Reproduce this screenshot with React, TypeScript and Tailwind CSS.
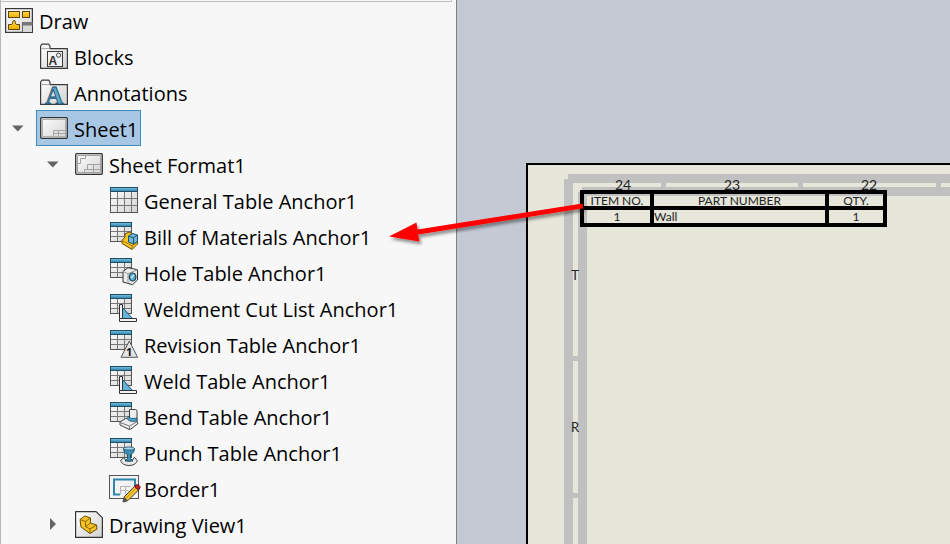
import type { ReactNode } from "react";

const INK = "#3a3a3a";

function Icon({ children }: { children: ReactNode }) {
  return (
    <svg width="28" height="28" viewBox="0 0 28 28" className="shrink-0 overflow-visible" aria-hidden="true">
      {children}
    </svg>
  );
}

function Gradients() {
  return (
    <svg width="0" height="0" className="absolute" aria-hidden="true">
      <defs>
        <linearGradient id="paper" x1="0" y1="0" x2="1" y2="1">
          <stop offset="0" stopColor="#ffffff" />
          <stop offset="1" stopColor="#d2d2d2" />
        </linearGradient>
        <linearGradient id="gold" x1="0" y1="0" x2="0" y2="1">
          <stop offset="0" stopColor="#ffd94a" />
          <stop offset="1" stopColor="#eeb000" />
        </linearGradient>
        <linearGradient id="sea" x1="0" y1="0" x2="0" y2="1">
          <stop offset="0" stopColor="#7cc4e2" />
          <stop offset="1" stopColor="#2b7fa8" />
        </linearGradient>
        <filter id="shade" x="-10%" y="-30%" width="120%" height="170%">
          <feDropShadow dx="2" dy="3" stdDeviation="1.5" floodColor="#000" floodOpacity="0.4" />
        </filter>
      </defs>
    </svg>
  );
}

function DrawIcon() {
  return (
    <Icon>
      <rect x="0.6" y="2.6" width="26.8" height="23.8" fill="url(#paper)" stroke={INK} strokeWidth="1.2" />
      <rect x="3.5" y="5.5" width="11" height="6" fill="url(#gold)" stroke="#5e4300" />
      <rect x="17.5" y="5.5" width="7" height="6" fill="url(#gold)" stroke="#5e4300" />
      <path d="M3.5 23.5v-5h3c2 0 0-4 2.5-4s.5 4 2.5 4h3v5z" fill="url(#gold)" stroke="#5e4300" />
      <rect x="17" y="16" width="10" height="10" fill="#d9d9d9" />
      <rect x="17" y="16" width="10.5" height="3.5" fill="#777" />
      <path d="M17.5 16v10" stroke="#666" />
    </Icon>
  );
}

function Folder() {
  return (
    <>
      <path
        d="M0.6 26.4V4l1.4-1.8h6.6L10 4v2.6h17.4v19.8z"
        fill="url(#paper)"
        stroke={INK}
        strokeWidth="1.2"
        strokeLinejoin="round"
      />
      <path d="M1.5 6.6h8" stroke="#a5a5a5" />
    </>
  );
}

function BlocksIcon() {
  return (
    <Icon>
      <Folder />
      <rect x="7.5" y="9.5" width="15" height="15" fill="#f2f2f2" stroke={INK} />
      <text x="8.5" y="22.5" fontSize="12" fontWeight="700" fontFamily="Liberation Sans, sans-serif" fill="#333">
        A
      </text>
      <circle cx="18.6" cy="13.2" r="2.1" fill="none" stroke="#444" />
    </Icon>
  );
}

function AnnotationsIcon() {
  return (
    <Icon>
      <Folder />
      <text
        x="14.3"
        y="26"
        textAnchor="middle"
        fontSize="25"
        fontWeight="700"
        fontFamily="Liberation Serif, serif"
        fill="#5aa9cb"
        stroke="#1c4f6b"
        strokeWidth="0.8"
      >
        A
      </text>
    </Icon>
  );
}

function SheetIcon() {
  return (
    <Icon>
      <rect x="0.7" y="3.7" width="26.6" height="20.6" rx="1" fill="url(#paper)" stroke="#333" strokeWidth="1.3" />
      <rect x="2.5" y="5.5" width="23" height="17" fill="none" stroke="#b0b0b0" />
      <path d="M13.5 22.5v-6h12M13.5 19.5h12M18.5 16.5v6" fill="none" stroke="#a5a5a5" />
    </Icon>
  );
}

function SheetFormatIcon() {
  return (
    <Icon>
      <rect x="0.7" y="3.7" width="26.6" height="20.6" rx="1" fill="url(#paper)" stroke="#333" strokeWidth="1.3" />
      <path
        d="M2.5 22.5v-17h23v17zM5.5 13.5v-5h5v-3M2.5 13.5h3M9.5 22.5v-3h16M12.5 19.5v-5h13M18.5 14.5v8"
        fill="none"
        stroke="#a2a2a2"
      />
    </Icon>
  );
}

function GeneralTableIcon() {
  return (
    <Icon>
      <rect x="0.5" y="1.5" width="27" height="25" fill="url(#paper)" stroke="#555" />
      <rect x="0.5" y="1.5" width="27" height="4" fill="url(#sea)" stroke="#1f4f68" />
      <path d="M7.5 6v20M14.5 6v20M21.5 6v20M1 12.5h26M1 19.5h26" stroke="#777" />
    </Icon>
  );
}

function AnchorIcon({ children }: { children: ReactNode }) {
  return (
    <Icon>
      <rect x="0.5" y="0.5" width="21" height="19" fill="url(#paper)" stroke="#555" />
      <rect x="0.5" y="0.5" width="21" height="4" fill="url(#sea)" stroke="#1f4f68" />
      <path d="M7.5 5v14M14.5 5v14M1 9.5h20M1 14.5h20" stroke="#777" />
      {children}
    </Icon>
  );
}

function BomIcon() {
  return (
    <AnchorIcon>
      <path
        d="M12 18.5l3-3.5v-3l4-2 8.5 4V22L22 27.5l-10-6z"
        fill="#f6c324"
        stroke="#6b4b00"
        strokeLinejoin="round"
      />
      <path d="M12 18.5l10 5.2v3.6M22 23.7l5-3.5" fill="none" stroke="#a87800" />
      <path d="M18.5 14l4-2.5 5 1.5v6.5l-4 2.5-5-2z" fill="#6fbadb" stroke="#1f4f68" strokeLinejoin="round" />
      <path d="M18.5 14l5 1.8V22M23.5 15.8l4-2.8" fill="none" stroke="#1f4f68" />
    </AnchorIcon>
  );
}

function HoleIcon() {
  return (
    <AnchorIcon>
      <path d="M13 13.5l5-3.8 9.5 2V22l-5 4.7-9.5-2.7z" fill="#ececec" stroke="#333" strokeLinejoin="round" />
      <path d="M13 13.5l5 2.2 9.5-4M18 15.7v9.5" fill="none" stroke="#999" />
      <ellipse cx="22.6" cy="19" rx="3.3" ry="4" fill="#5aa9cb" stroke="#173f55" strokeWidth="1.2" />
      <path d="M21 20l3-3" stroke="#d9f0fa" strokeWidth="1.3" />
    </AnchorIcon>
  );
}

function WeldIcon() {
  return (
    <AnchorIcon>
      <path d="M12.5 13.5v11h10z" fill="#62b4d8" stroke="#1f4f68" />
      <path d="M9.5 10.5h3v14h-3z" fill="#f4f4f4" stroke="#333" />
      <path d="M9.5 24.5h17v3h-17z" fill="#f4f4f4" stroke="#333" />
    </AnchorIcon>
  );
}

function RevisionIcon() {
  return (
    <AnchorIcon>
      <path d="M19.3 11l8.3 16.3H11z" fill="#e3e3e3" stroke="#555" strokeLinejoin="round" />
      <text
        x="19.2"
        y="26.3"
        textAnchor="middle"
        fontSize="11"
        fontWeight="700"
        fontFamily="Open Sans, sans-serif"
        fill="#111"
      >
        1
      </text>
    </AnchorIcon>
  );
}

function BendIcon() {
  return (
    <AnchorIcon>
      <path
        d="M19.5 7.5h6l1.5 1v11l1 2-7 5.5-1.500.500-9.500-4.500V20l5.500-3.500 4 .5z"
        fill="#ededed"
        stroke="#444"
        strokeLinejoin="round"
      />
      <path
        d="M18.500 14.500c1.500 2 4 2.500 8.500 1.500v3c-4.500 1-8 .500-10-2.500z"
        fill="#4a9cc2"
        stroke="#1f4f68"
        strokeWidth="0.8"
      />
      <path d="M10 20.500l9.500 3.500 8-4.500M19.500 24v3.500" fill="none" stroke="#777" />
    </AnchorIcon>
  );
}

function PunchIcon() {
  return (
    <AnchorIcon>
      <path
        d="M14 19.500l-3.500 3c1 3 4 5 8.500 5s7.500-2 8.500-5l-3.500-3-1.500 2.500c-2 1.500-5 1.500-7 0z"
        fill="#e8e8e8"
        stroke="#444"
        strokeLinejoin="round"
      />
      <path
        d="M13.500 10.500c0 3 1.500 5 4 6v4l-2.500 2.500h8l-2.500-2.500v-4c2.500-1 4-3 4-6z"
        fill="#3f92ba"
        stroke="#1f4f68"
        strokeLinejoin="round"
      />
      <ellipse cx="19" cy="10.500" rx="5.500" ry="1.600" fill="#a5d8ec" stroke="#1f4f68" strokeWidth="0.8" />
    </AnchorIcon>
  );
}

function BorderIcon() {
  return (
    <Icon>
      <rect x="-0.5" y="1.5" width="29" height="23" fill="#f3f3f3" stroke="#555" />
      <path d="M10 20.5H4v-15h21v7" fill="none" stroke="#2f86ad" strokeWidth="2" />
      <path d="M10.5 20.5v-8h10M10.5 16.5h8M15.5 12.5v8" fill="none" stroke="#b5b5b5" />
      <path d="M13 28l1.2-5L24.5 12.300l4 3.700L18 26.5z" fill="#f6c935" stroke="#333" strokeLinejoin="round" />
      <path d="M15.5 25L26 14" stroke="#c08a00" />
      <path d="M24.5 12.3l1.800-1.500c2.500-.5 4 1.200 3.700 3l-1.500 2.200z" fill="#c8202f" stroke="#6b1018" />
      <path d="M13 28l1.2-5 3.8 3.5z" fill="#555" />
    </Icon>
  );
}

function DrawingViewIcon() {
  return (
    <Icon>
      <path
        d="M0.6 1.6h20.500l6.300 6.300v19.500H.6z"
        fill="url(#paper)"
        stroke="#333"
        strokeWidth="1.2"
        strokeLinejoin="round"
      />
      <path
        d="M5 9.500l5-3.500 5.500 2v5l6 2 .500 4-7 4.500-9-6.500z"
        fill="#f6c324"
        stroke="#6b4b00"
        strokeLinejoin="round"
      />
      <path
        d="M5 9.500l5.500 2 5-3.500M10.500 11.500v5l4.500 2.500 6.500-4M15 19v4.500M10.500 16.500l5-3.500"
        fill="none"
        stroke="#8a6200"
      />
    </Icon>
  );
}

type Node = {
  label: string;
  icon: ReactNode;
  open?: boolean;
  closed?: boolean;
  selected?: boolean;
  children?: Node[];
};

const tree: Node[] = [
  { label: "Blocks", icon: <BlocksIcon /> },
  { label: "Annotations", icon: <AnnotationsIcon /> },
  {
    label: "Sheet1",
    icon: <SheetIcon />,
    open: true,
    selected: true,
    children: [
      {
        label: "Sheet Format1",
        icon: <SheetFormatIcon />,
        open: true,
        children: [
          { label: "General Table Anchor1", icon: <GeneralTableIcon /> },
          { label: "Bill of Materials Anchor1", icon: <BomIcon /> },
          { label: "Hole Table Anchor1", icon: <HoleIcon /> },
          { label: "Weldment Cut List Anchor1", icon: <WeldIcon /> },
          { label: "Revision Table Anchor1", icon: <RevisionIcon /> },
          { label: "Weld Table Anchor1", icon: <WeldIcon /> },
          { label: "Bend Table Anchor1", icon: <BendIcon /> },
          { label: "Punch Table Anchor1", icon: <PunchIcon /> },
          { label: "Border1", icon: <BorderIcon /> },
        ],
      },
      { label: "Drawing View1", icon: <DrawingViewIcon />, closed: true },
    ],
  },
];

function Label({ node }: { node: Node }) {
  return (
    <button
      type="button"
      className={
        "flex h-9 items-center gap-1.5 border pl-[3px] pr-0.5 text-left whitespace-nowrap " +
        (node.selected ? "border-[#3d8cc0] bg-[#a7c7e4]" : "border-transparent")
      }
    >
      {node.icon}
      <span className="pt-1 leading-7">{node.label}</span>
    </button>
  );
}

function TreeItem({ node }: { node: Node }) {
  return (
    <li>
      <div className="flex h-9 items-center">
        {node.open || node.closed ? (
          <button
            type="button"
            aria-label={(node.open ? "Collapse " : "Expand ") + node.label}
            aria-expanded={Boolean(node.open)}
            className="flex h-9 w-[35px] shrink-0 items-center justify-center pr-0.5"
          >
            <svg width="12" height="12" viewBox="0 0 12 12" fill="#646464" aria-hidden="true">
              {node.open ? <path d="M0 3.5h11.5L5.8 9.5z" /> : <path d="M3 0v12l6-6z" />}
            </svg>
          </button>
        ) : (
          <span className="w-[35px] shrink-0" />
        )}
        <Label node={node} />
      </div>
      {node.children && (
        <ul className="pl-[35px]">
          {node.children.map((child) => (
            <TreeItem key={child.label} node={child} />
          ))}
        </ul>
      )}
    </li>
  );
}

function ZoneFrame() {
  return (
    <svg width="100%" height="100%" className="absolute inset-0" aria-hidden="true">
      <g fill="#c0c0c0">
        <rect x="40" y="9" width="100%" height="9" />
        <rect x="36" y="14" width="9" height="100%" />
        <rect x="54" y="22" width="100%" height="9" />
        <rect x="50" y="27" width="9" height="100%" />
        <rect x="133" y="17" width="5" height="6" />
        <rect x="270" y="17" width="5" height="6" />
        <rect x="408" y="17" width="5" height="6" />
        <rect x="44" y="191" width="7" height="5" />
        <rect x="44" y="328" width="7" height="5" />
      </g>
      <g fill="#222" fontSize="14" textAnchor="middle">
        <text x="95" y="25">24</text>
        <text x="204" y="25">23</text>
        <text x="341" y="25">22</text>
        <text x="47" y="115" fontSize="13">T</text>
        <text x="47" y="267" fontSize="13">R</text>
      </g>
    </svg>
  );
}

export default function App() {
  return (
    <div className="relative flex h-screen overflow-hidden bg-[#c5c9d4]">
      <Gradients />
      <nav
        aria-label="Feature tree"
        className="w-[457px] shrink-0 overflow-hidden border-r border-l border-l-[#b8b8b8] border-r-[#808080] bg-[#f7f7f7] font-['Open_Sans','Noto_Sans',sans-serif] text-xl text-black"
      >
        <div className="mr-1 h-0.5 border-r border-b border-[#c0c0c0]" />
        <Label node={{ label: "Draw", icon: <DrawIcon /> }} />
        <ul>
          {tree.map((node) => (
            <TreeItem key={node.label} node={node} />
          ))}
        </ul>
      </nav>

      <main className="flex min-w-0 flex-1 pt-[163px] pl-[69px] font-['Lato','Open_Sans',sans-serif] text-[#222]">
        <div className="relative flex-1 overflow-hidden border-t-2 border-l-2 border-black bg-[#e6e6db]">
          <ZoneFrame />
          <table className="relative mt-[25px] ml-[52px] w-[307px] table-fixed border-collapse text-center text-xs leading-3">
            <colgroup>
              <col className="w-[70px]" />
              <col className="w-[175px]" />
              <col className="w-[58px]" />
            </colgroup>
            <thead>
              <tr className="h-4 leading-[10px]">
                <th className="border-4 border-black p-0 pt-0.5 font-normal">ITEM NO.</th>
                <th className="border-4 border-black p-0 pt-0.5 font-normal">PART NUMBER</th>
                <th className="border-4 border-black p-0 pt-0.5 font-normal">QTY.</th>
              </tr>
            </thead>
            <tbody>
              <tr className="h-[17px]">
                <td className="border-4 border-black p-0">1</td>
                <td className="border-4 border-black p-0 text-left">Wall</td>
                <td className="border-4 border-black p-0">1</td>
              </tr>
            </tbody>
          </table>
        </div>
      </main>

      <svg
        width="200"
        height="60"
        viewBox="0 0 200 60"
        className="pointer-events-none absolute top-[195px] left-[388px]"
        aria-hidden="true"
      >
        <g filter="url(#shade)" fill="#ff0000">
          <path d="M1 41.5L28.5 27.5L29.5 34.5L194.500 8.500L195.300 13.300L30.200 39.500L31.500 46.500z" />
        </g>
      </svg>
    </div>
  );
}
